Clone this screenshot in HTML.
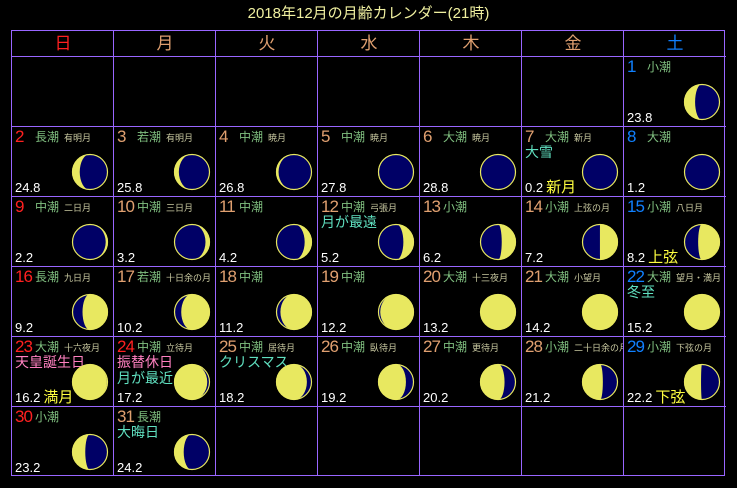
<!DOCTYPE html>
<html><head><meta charset="utf-8">
<style>
body{margin:0;background:#000;width:737px;height:488px;overflow:hidden;position:relative;font-family:"Liberation Sans","Noto Sans CJK JP",sans-serif;}
.title{position:absolute;left:0;width:737px;top:5px;text-align:center;color:#f0f0a0;font-size:15px;line-height:18px;}
.grid{position:absolute;left:11px;top:30px;width:714px;height:446px;border:1px solid #9966ff;box-sizing:border-box;}
.hl{position:absolute;left:11px;width:715px;height:1px;background:#9966ff;}
.vl{position:absolute;top:30px;width:1px;height:446px;background:#9966ff;}
.hd{position:absolute;top:31px;height:25px;width:102px;text-align:center;font-size:17px;line-height:25px;}
.c{position:absolute;width:102px;height:70px;overflow:hidden;}
.n{position:absolute;left:4px;top:1px;font-size:17px;line-height:20px;color:#e0a070;letter-spacing:-1px;}
.s{position:absolute;left:24px;top:4px;font-size:12px;line-height:14px;color:#80c080;white-space:nowrap;}
.s i{font-style:normal;font-size:9px;color:#c8c8a0;margin-left:5px;}
.e{position:absolute;left:4px;font-size:14px;line-height:16px;color:#60e0c0;white-space:nowrap;}
.a{position:absolute;left:4px;top:55px;font-size:13px;line-height:14px;color:#fff;white-space:nowrap;}
.a b{font-weight:normal;color:#ffff40;font-size:15px;margin-left:3px;}
.m{position:absolute;left:60px;top:27px;}
.sun{color:#ff2020}.sat{color:#1080ff}
</style></head><body>
<div class="title">2018年12月の月齢カレンダー(21時)</div>
<div class="grid"></div>
<div class="hl" style="top:56px"></div><div class="hl" style="top:126px"></div><div class="hl" style="top:196px"></div><div class="hl" style="top:266px"></div><div class="hl" style="top:336px"></div><div class="hl" style="top:406px"></div>
<div class="vl" style="left:113px"></div><div class="vl" style="left:215px"></div><div class="vl" style="left:317px"></div><div class="vl" style="left:419px"></div><div class="vl" style="left:521px"></div><div class="vl" style="left:623px"></div>
<div class="hd sun" style="left:12px">日</div><div class="hd" style="left:114px;color:#e0a070">月</div><div class="hd" style="left:216px;color:#e0a070">火</div><div class="hd" style="left:318px;color:#e0a070">水</div><div class="hd" style="left:420px;color:#e0a070">木</div><div class="hd" style="left:522px;color:#e0a070">金</div><div class="hd sat" style="left:624px">土</div>

<div class="c" style="left:623px;top:56px"><div class="n sat">1</div><div class="s">小潮</div><div class="a">23.8</div><svg class="m" data-age="23.8"></svg></div>

<div class="c" style="left:11px;top:126px"><div class="n sun">2</div><div class="s">長潮<i>有明月</i></div><div class="a">24.8</div><svg class="m" data-age="24.8"></svg></div>
<div class="c" style="left:113px;top:126px"><div class="n">3</div><div class="s">若潮<i>有明月</i></div><div class="a">25.8</div><svg class="m" data-age="25.8"></svg></div>
<div class="c" style="left:215px;top:126px"><div class="n">4</div><div class="s">中潮<i>暁月</i></div><div class="a">26.8</div><svg class="m" data-age="26.8"></svg></div>
<div class="c" style="left:317px;top:126px"><div class="n">5</div><div class="s">中潮<i>暁月</i></div><div class="a">27.8</div><svg class="m" data-age="27.8"></svg></div>
<div class="c" style="left:419px;top:126px"><div class="n">6</div><div class="s">大潮<i>暁月</i></div><div class="a">28.8</div><svg class="m" data-age="28.8"></svg></div>
<div class="c" style="left:521px;top:126px"><div class="n">7</div><div class="s">大潮<i>新月</i></div><div class="e" style="top:18px">大雪</div><div class="a">0.2<b>新月</b></div><svg class="m" data-age="0.2"></svg></div>
<div class="c" style="left:623px;top:126px"><div class="n sat">8</div><div class="s">大潮</div><div class="a">1.2</div><svg class="m" data-age="1.2"></svg></div>

<div class="c" style="left:11px;top:196px"><div class="n sun">9</div><div class="s">中潮<i>二日月</i></div><div class="a">2.2</div><svg class="m" data-age="2.2"></svg></div>
<div class="c" style="left:113px;top:196px"><div class="n">10</div><div class="s">中潮<i>三日月</i></div><div class="a">3.2</div><svg class="m" data-age="3.2"></svg></div>
<div class="c" style="left:215px;top:196px"><div class="n">11</div><div class="s">中潮</div><div class="a">4.2</div><svg class="m" data-age="4.2"></svg></div>
<div class="c" style="left:317px;top:196px"><div class="n">12</div><div class="s">中潮<i>弓張月</i></div><div class="e" style="top:18px">月が最遠</div><div class="a">5.2</div><svg class="m" data-age="5.2"></svg></div>
<div class="c" style="left:419px;top:196px"><div class="n">13</div><div class="s">小潮</div><div class="a">6.2</div><svg class="m" data-age="6.2"></svg></div>
<div class="c" style="left:521px;top:196px"><div class="n">14</div><div class="s">小潮<i>上弦の月</i></div><div class="a">7.2</div><svg class="m" data-age="7.2"></svg></div>
<div class="c" style="left:623px;top:196px"><div class="n sat">15</div><div class="s">小潮<i>八日月</i></div><div class="a">8.2<b>上弦</b></div><svg class="m" data-age="8.2"></svg></div>

<div class="c" style="left:11px;top:266px"><div class="n sun">16</div><div class="s">長潮<i>九日月</i></div><div class="a">9.2</div><svg class="m" data-age="9.2"></svg></div>
<div class="c" style="left:113px;top:266px"><div class="n">17</div><div class="s">若潮<i>十日余の月</i></div><div class="a">10.2</div><svg class="m" data-age="10.2"></svg></div>
<div class="c" style="left:215px;top:266px"><div class="n">18</div><div class="s">中潮</div><div class="a">11.2</div><svg class="m" data-age="11.2"></svg></div>
<div class="c" style="left:317px;top:266px"><div class="n">19</div><div class="s">中潮</div><div class="a">12.2</div><svg class="m" data-age="12.2"></svg></div>
<div class="c" style="left:419px;top:266px"><div class="n">20</div><div class="s">大潮<i>十三夜月</i></div><div class="a">13.2</div><svg class="m" data-age="13.2"></svg></div>
<div class="c" style="left:521px;top:266px"><div class="n">21</div><div class="s">大潮<i>小望月</i></div><div class="a">14.2</div><svg class="m" data-age="14.2"></svg></div>
<div class="c" style="left:623px;top:266px"><div class="n sat">22</div><div class="s">大潮<i>望月・満月</i></div><div class="e" style="top:18px">冬至</div><div class="a">15.2</div><svg class="m" data-age="15.2"></svg></div>

<div class="c" style="left:11px;top:336px"><div class="n sun">23</div><div class="s">大潮<i>十六夜月</i></div><div class="e" style="top:18px;color:#ff80c0">天皇誕生日</div><div class="a">16.2<b>満月</b></div><svg class="m" data-age="16.2"></svg></div>
<div class="c" style="left:113px;top:336px"><div class="n sun">24</div><div class="s">中潮<i>立待月</i></div><div class="e" style="top:18px;color:#ff80c0">振替休日</div><div class="e" style="top:34px">月が最近</div><div class="a">17.2</div><svg class="m" data-age="17.2"></svg></div>
<div class="c" style="left:215px;top:336px"><div class="n">25</div><div class="s">中潮<i>居待月</i></div><div class="e" style="top:18px">クリスマス</div><div class="a">18.2</div><svg class="m" data-age="18.2"></svg></div>
<div class="c" style="left:317px;top:336px"><div class="n">26</div><div class="s">中潮<i>臥待月</i></div><div class="a">19.2</div><svg class="m" data-age="19.2"></svg></div>
<div class="c" style="left:419px;top:336px"><div class="n">27</div><div class="s">中潮<i>更待月</i></div><div class="a">20.2</div><svg class="m" data-age="20.2"></svg></div>
<div class="c" style="left:521px;top:336px"><div class="n">28</div><div class="s">小潮<i>二十日余の月</i></div><div class="a">21.2</div><svg class="m" data-age="21.2"></svg></div>
<div class="c" style="left:623px;top:336px"><div class="n sat">29</div><div class="s">小潮<i>下弦の月</i></div><div class="a">22.2<b>下弦</b></div><svg class="m" data-age="22.2"></svg></div>

<div class="c" style="left:11px;top:406px"><div class="n sun">30</div><div class="s">小潮</div><div class="a">23.2</div><svg class="m" data-age="23.2"></svg></div>
<div class="c" style="left:113px;top:406px"><div class="n">31</div><div class="s">長潮</div><div class="e" style="top:18px">大晦日</div><div class="a">24.2</div><svg class="m" data-age="24.2"></svg></div>

<script>
document.querySelectorAll('svg.m').forEach(function(s){
  var age=parseFloat(s.getAttribute('data-age'));
  var r=18,cx=19,cy=19;
  s.setAttribute('width','38');s.setAttribute('height','38');
  var th=2*Math.PI*((age+0.2)%29.53)/29.53;
  var k=Math.cos(th);var rx=Math.max(Math.abs(k)*r,0.01);
  var waxing=th<Math.PI;
  var top=cx+','+(cy-r),bot=cx+','+(cy+r);
  var p;
  if(waxing){
    p='M'+top+' A'+r+','+r+' 0 0 1 '+bot+' A'+rx+','+r+' 0 0 '+(k>0?0:1)+' '+top+'Z';
  }else{
    p='M'+top+' A'+r+','+r+' 0 0 0 '+bot+' A'+rx+','+r+' 0 0 '+(k>0?1:0)+' '+top+'Z';
  }
  s.innerHTML='<circle cx="'+cx+'" cy="'+cy+'" r="'+(r-0.5)+'" fill="#000066" stroke="#e8e860" stroke-width="1.2"/><path d="'+p+'" fill="#e8e860"/>';
});
</script>
</body></html>
